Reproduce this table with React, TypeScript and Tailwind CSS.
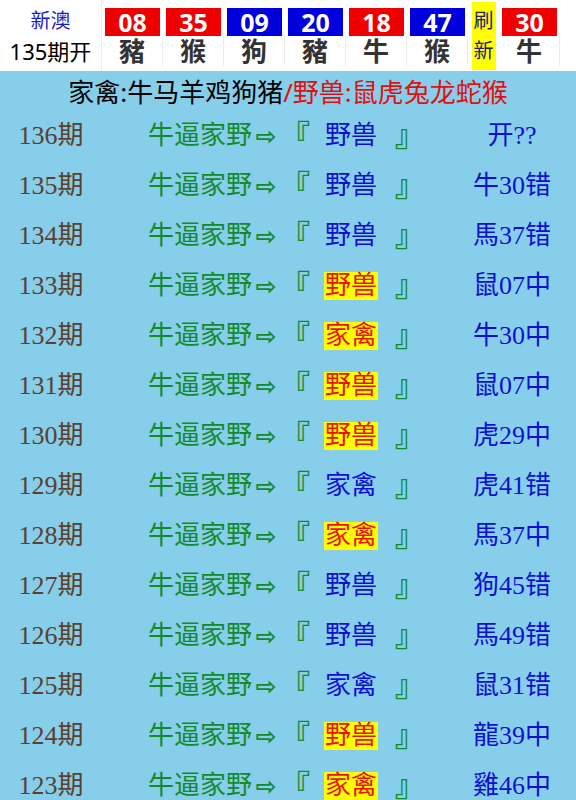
import React from "react";

type Ball = { num: string; animal: string; color: "red" | "blue" };

type Row = {
  issue: string;
  pick: "野兽" | "家禽";
  hit: boolean;
  result: string;
};

const balls: Ball[] = [
  { num: "08", animal: "豬", color: "red" },
  { num: "35", animal: "猴", color: "red" },
  { num: "09", animal: "狗", color: "blue" },
  { num: "20", animal: "豬", color: "blue" },
  { num: "18", animal: "牛", color: "red" },
  { num: "47", animal: "猴", color: "blue" },
];

const rows: Row[] = [
  { issue: "136", pick: "野兽", hit: false, result: "开??" },
  { issue: "135", pick: "野兽", hit: false, result: "牛30错" },
  { issue: "134", pick: "野兽", hit: false, result: "馬37错" },
  { issue: "133", pick: "野兽", hit: true, result: "鼠07中" },
  { issue: "132", pick: "家禽", hit: true, result: "牛30中" },
  { issue: "131", pick: "野兽", hit: true, result: "鼠07中" },
  { issue: "130", pick: "野兽", hit: true, result: "虎29中" },
  { issue: "129", pick: "家禽", hit: false, result: "虎41错" },
  { issue: "128", pick: "家禽", hit: true, result: "馬37中" },
  { issue: "127", pick: "野兽", hit: false, result: "狗45错" },
  { issue: "126", pick: "野兽", hit: false, result: "馬49错" },
  { issue: "125", pick: "家禽", hit: false, result: "鼠31错" },
  { issue: "124", pick: "野兽", hit: true, result: "龍39中" },
  { issue: "123", pick: "家禽", hit: true, result: "雞46中" },
];

const sans = "font-['Noto_Sans','Noto_Sans_CJK_SC',sans-serif]";
const serif = "font-['Liberation_Serif','Noto_Sans_CJK_SC',serif]";

function BallCell({ ball }: { ball: Ball }) {
  return (
    <div className="flex w-[61px] flex-col items-center pt-[8px]">
      <div
        className={
          "flex h-[28px] w-[55px] items-center justify-center text-[25px] leading-none font-bold text-white " +
          (ball.color === "red" ? "bg-[#ee0000]" : "bg-[#0000dd]")
        }
      >
        {ball.num}
      </div>
      <div className="flex h-[30px] w-full items-center justify-center border-r border-[#ececec] text-[26px] leading-none font-bold text-[#333333]">
        {ball.animal}
      </div>
    </div>
  );
}

function Header() {
  return (
    <div className={"flex h-[71px] bg-white " + sans}>
      <div className="flex w-[102px] flex-col items-center justify-center border-r border-[#ececec]">
        <span className="text-[20px] leading-[30px] text-[#1c1cc0]">新澳</span>
        <span className="text-[22px] leading-[30px] text-black">135期开</span>
      </div>
      {balls.map((b, i) => (
        <BallCell key={i} ball={b} />
      ))}
      <div className="flex w-[31px] justify-center">
        <div className="mt-[2px] flex h-[68px] w-[24px] flex-col items-center justify-center bg-[#ffff00] text-[20px] leading-[30px] text-[#22226e]">
          <span>刷</span>
          <span>新</span>
        </div>
      </div>
      <BallCell ball={{ num: "30", animal: "牛", color: "red" }} />
    </div>
  );
}

function RowLine({ row }: { row: Row }) {
  return (
    <div className={"flex h-[50px] items-center text-[26px] leading-none " + serif}>
      <div className="w-[102px] text-center text-[#5a4030]">{row.issue}期</div>
      <div className="flex w-[356px] items-center pl-[46px] text-[#138a2c]">
        <span>牛逼家野</span>
        <span className="w-[28px] text-center font-['DejaVu_Sans',sans-serif] text-[25px] font-bold">⇨</span>
        <span className="w-[26px] text-[30px] font-bold">『</span>
        <span
          className={
            "ml-[18px] px-[1px] py-[1px] " +
            (row.hit ? "bg-[#ffff00] text-[#ee1100]" : "text-[#1010d0]")
          }
        >
          {row.pick}
        </span>
        <span className="ml-[17px] text-[30px] font-bold">』</span>
      </div>
      <div className="w-[108px] text-center text-[#1010d0]">{row.result}</div>
    </div>
  );
}

export default function App() {
  return (
    <div className="h-[800px] w-[576px] overflow-hidden bg-[#87ceeb]">
      <Header />
      <div className={"flex h-[40px] items-center justify-center pt-[3px] text-[26px] " + sans}>
        <span className="text-black">家禽:牛马羊鸡狗猪</span>
        <span className="text-[#e01010]">/野兽:鼠虎兔龙蛇猴</span>
      </div>
      {rows.map((r) => (
        <RowLine key={r.issue} row={r} />
      ))}
    </div>
  );
}
